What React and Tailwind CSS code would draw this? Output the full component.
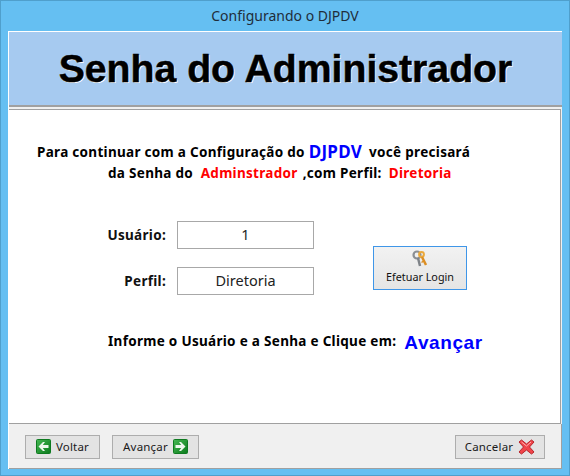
const sans = "font-['Liberation_Sans',Arial,sans-serif]";
const body = "font-['Noto_Sans',Tahoma,sans-serif]";

function ArrowIcon({ dir }) {
  return (
    <svg width="15" height="15" viewBox="0 0 15 15" className="shrink-0">
      <defs>
        <linearGradient id={"g" + dir} x1="0" y1="0" x2="1" y2="1">
          <stop offset="0" stopColor="#45b852" />
          <stop offset="1" stopColor="#0b7a1c" />
        </linearGradient>
      </defs>
      <rect x="0.5" y="0.5" width="14" height="14" rx="1" fill={"url(#g" + dir + ")"} stroke="#0e7a20" />
      {dir === "left" ? (
        <path d="M2.5 7.5 L7 3 L9 3 L6.8 6 H12.5 V9 H6.8 L9 12 L7 12 Z" fill="#eef8ee" />
      ) : (
        <path d="M12.5 7.5 L8 3 L6 3 L8.2 6 H2.5 V9 H8.2 L6 12 L8 12 Z" fill="#eef8ee" />
      )}
    </svg>
  );
}

function CrossIcon() {
  return (
    <svg width="17" height="16" viewBox="0 0 17 16" className="shrink-0">
      <path
        d="M1 3 L3.5 1 L8.5 5 L13.5 1 L16 3 L11.5 8 L16 13 L13.5 15 L8.5 11 L3.5 15 L1 13 L5.5 8 Z"
        fill="#f0454a"
        stroke="#b8242a"
        strokeWidth="1"
        strokeLinejoin="round"
      />
      <path d="M3.5 3 L8.5 7 L13 3" fill="none" stroke="#ffb0b0" strokeWidth="1" />
    </svg>
  );
}

function KeysIcon() {
  return (
    <svg width="16" height="17" viewBox="0 0 16 17" className="shrink-0">
      <circle cx="5" cy="5" r="3.5" fill="none" stroke="#8b8f94" strokeWidth="2.2" />
      <path d="M6 8 L8 16" stroke="#7f8388" strokeWidth="2.5" />
      <circle cx="9.5" cy="4.5" r="2.4" fill="none" stroke="#eba93c" strokeWidth="2" />
      <path d="M10 7 L14 15" stroke="#dc8f24" strokeWidth="2.5" />
      <path d="M11.5 11 L9.5 12.5" stroke="#dc8f24" strokeWidth="1.5" />
    </svg>
  );
}

function FooterButton({ children, width }) {
  return (
    <button className={`${width} h-[24px] flex items-center justify-center gap-[5px] bg-[#e3e3e3] border border-[#adadad] text-[11.5px] tracking-[0.2px] text-[#1a1a1a] ${body}`}>
      {children}
    </button>
  );
}

function Field({ label, value }) {
  return (
    <div className="flex items-center">
      <span className="w-[157px] text-right text-[13.5px] font-bold text-[#111]">{label}</span>
      <div className="ml-[11px] w-[137px] h-[28px] flex items-center justify-center bg-white border border-[#a8a8a8] font-normal tracking-normal text-[14.5px] text-[#222]">
        {value}
      </div>
    </div>
  );
}

export default function App() {
  return (
    <div className="w-[570px] h-[476px] bg-[#65bff2] border border-[#4f9fcc] px-[7px] pb-[7px]">
      <div className={`h-[30px] pt-[6px] text-center text-[14px] leading-[18px] text-[#1f2d3a] ${body}`}>
        Configurando o DJPDV
      </div>
      <div className="h-[438px] flex flex-col bg-[#f0f0f0] border-l border-t border-white">
        <div className="h-[75px] pt-[2px] shrink-0 flex items-center justify-center bg-[#a6caf0] border-b-2 border-[#a0a0a0]">
          <h1 className={`text-[39.2px] font-bold text-black [-webkit-text-stroke:0.5px_black] [text-shadow:1px_1px_0_#fff] ${sans}`}>
            Senha do Administrador
          </h1>
        </div>
        <div className={`mt-[2px] h-[315px] shrink-0 bg-white border border-[#a0a0a0] border-l-0 mr-[1px] text-[13.5px] tracking-[0.3px] font-bold ${body}`}>
          <p className="pt-[32px] pl-[28px] h-[20px] box-content flex items-center text-black whitespace-pre">
            Para continuar com a Configuração do <span className="text-[17px] text-[#0000ff]">DJPDV</span>
            <span className="ml-[7px]">você precisará</span>
          </p>
          <p className="pt-[1px] pl-[99px] h-[20px] box-content flex items-center text-black whitespace-pre">
            da Senha do  <span className="text-[#ff0000]">Adminstrador</span>
            <span className="ml-[5px]">,com Perfil:</span>
            <span className="ml-[7px] text-[#ff0000]">Diretoria</span>
          </p>
          <div className="mt-[38px] flex items-center">
            <div className="flex flex-col gap-[18px]">
              <Field label="Usuário:" value="1" />
              <Field label="Perfil:" value="Diretoria" />
            </div>
            <button className="ml-[59px] mt-[20px] w-[94px] h-[44px] pt-[3px] flex flex-col items-center justify-start gap-[2px] bg-gradient-to-b from-[#f2f2f2] to-[#e5e5e5] border border-[#3f96e8] font-normal tracking-normal text-[10.8px] text-[#111]">
              <KeysIcon />
              Efetuar Login
            </button>
          </div>
          <div className="mt-[36px] pl-[99px] flex items-start text-black whitespace-pre">
            Informe o Usuário e a Senha e Clique em:
            <span className={`ml-[8px] -mt-[2px] text-[19px] tracking-[0.6px] text-[#0000ff] ${sans}`}>Avançar</span>
          </div>
        </div>
        <div className="flex-1 flex items-center justify-between pl-[16px] pr-[16px] pt-[1px] border-r border-b border-[#a0a0a0]">
          <div className="flex gap-[12px]">
            <FooterButton width="w-[75px]">
              <ArrowIcon dir="left" />
              Voltar
            </FooterButton>
            <FooterButton width="w-[87px]">
              Avançar
              <ArrowIcon dir="right" />
            </FooterButton>
          </div>
          <FooterButton width="w-[90px]">
            Cancelar
            <CrossIcon />
          </FooterButton>
        </div>
      </div>
    </div>
  );
}
